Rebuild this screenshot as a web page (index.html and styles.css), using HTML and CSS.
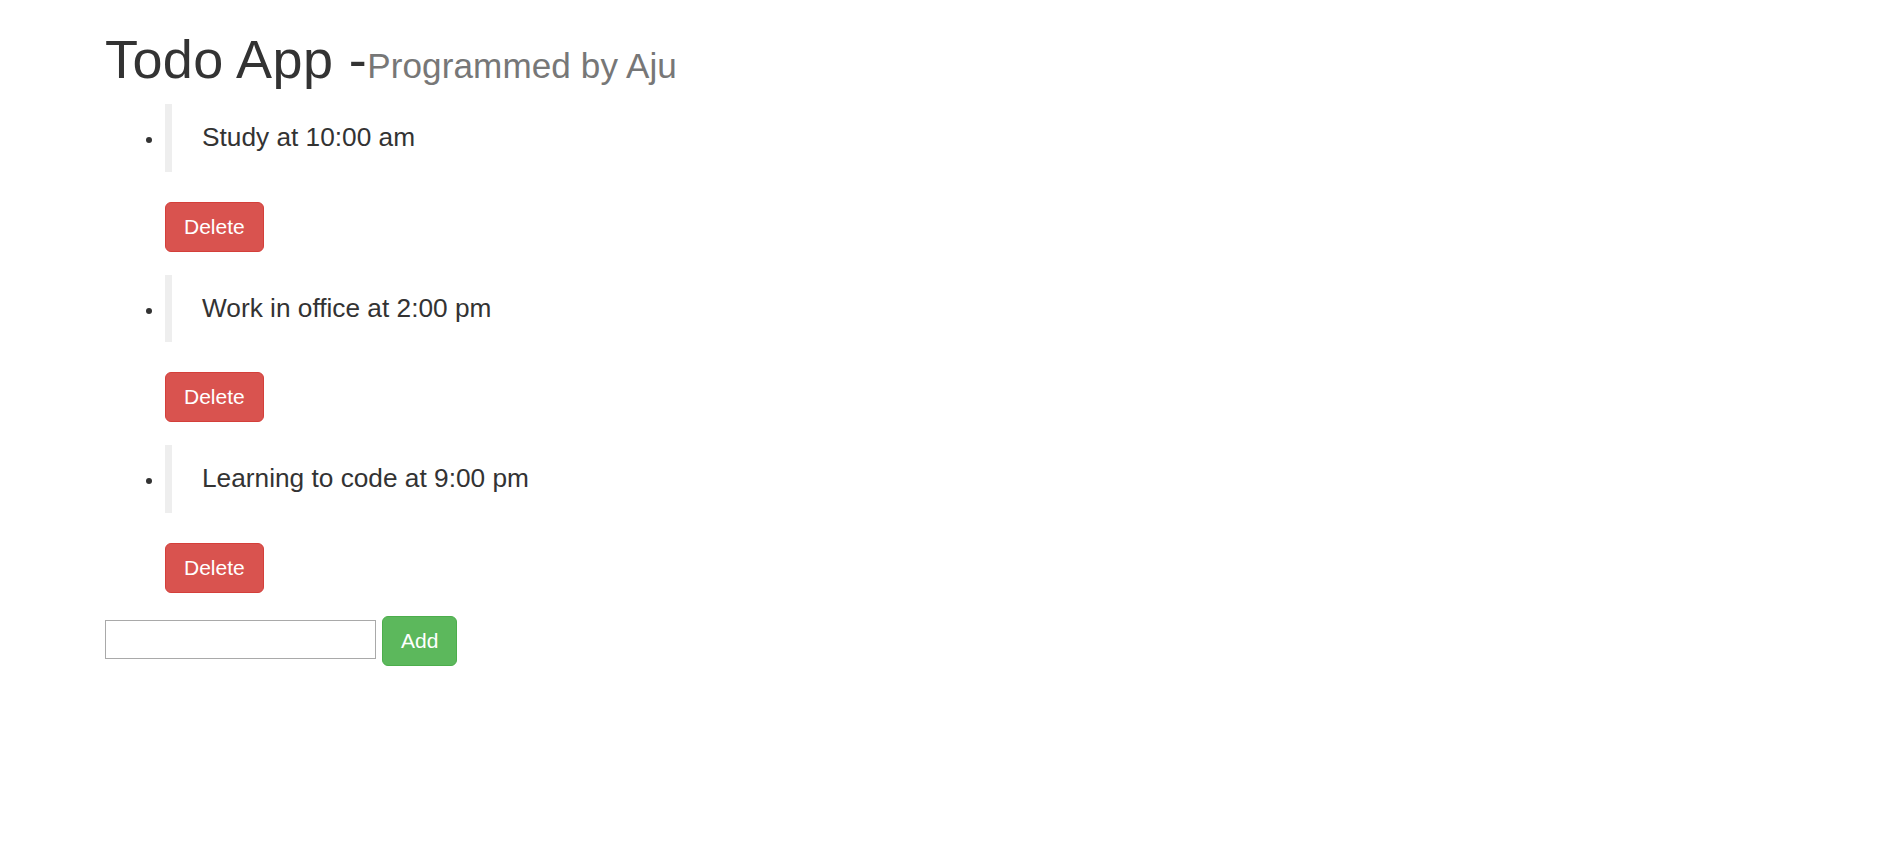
FILE: index.html
```html
<!DOCTYPE html>
<html lang="en">
<head>
<meta charset="utf-8">
<title>Todo App</title>
<link rel="stylesheet" href="styles.css">
</head>
<body>
<div class="container">
  <h1 class="title">Todo App -<small class="subtitle">Programmed by Aju</small></h1>
  <ul class="todo-list">
    <li class="todo-item">
      <blockquote class="todo-text">Study at 10:00 am</blockquote>
      <button class="btn btn-danger" type="button">Delete</button>
    </li>
    <li class="todo-item">
      <blockquote class="todo-text">Work in office at 2:00 pm</blockquote>
      <button class="btn btn-danger" type="button">Delete</button>
    </li>
    <li class="todo-item">
      <blockquote class="todo-text">Learning to code at 9:00 pm</blockquote>
      <button class="btn btn-danger" type="button">Delete</button>
    </li>
  </ul>
  <form class="add-form">
    <input class="add-input" type="text">
    <button class="btn btn-success" type="button">Add</button>
  </form>
</div>
</body>
</html>
```
FILE: styles.css
```css
html, body {
  margin: 0;
  padding: 0;
  background: #fff;
}

body {
  font-family: "Liberation Sans", Arial, Helvetica, sans-serif;
  font-size: 21px;
  line-height: 30px;
  color: #333;
}

.container {
  padding-left: 105px;
}

.title {
  margin: 30px 0 15px;
  font-size: 54px;
  line-height: 1.1;
  font-weight: normal;
  letter-spacing: 0.4px;
  color: #333;
}

.subtitle {
  font-size: 65%;
  line-height: 1;
  font-weight: normal;
  letter-spacing: 0.1px;
  color: #777;
}

.todo-list {
  margin: 0;
  padding-left: 60px;
  list-style: disc;
}

.todo-item {
  margin-bottom: 23px;
}

.todo-text {
  margin: 0 0 30px;
  padding: 15px 30px;
  border-left: 7px solid #eee;
  font-size: 26.25px;
  line-height: 37.5px;
}

.btn {
  display: block;
  width: fit-content;
  box-sizing: border-box;
  height: 50px;
  padding: 9px 18px;
  font-family: "Liberation Sans", Arial, Helvetica, sans-serif;
  font-size: 21px;
  line-height: 30px;
  color: #fff;
  border: 1px solid transparent;
  border-radius: 6px;
  cursor: pointer;
}

.btn-danger {
  background-color: #d9534f;
  border-color: #d43f3a;
}

.btn-success {
  background-color: #5cb85c;
  border-color: #4cae4c;
}

.add-form {
  display: flex;
  align-items: flex-start;
  gap: 6px;
  margin: 0;
}

.add-input {
  box-sizing: border-box;
  width: 271px;
  height: 39px;
  margin-top: 4px;
  padding: 1px 3px;
  border: 1px solid #a9a9a9;
  border-radius: 0;
  font-family: "Liberation Sans", Arial, Helvetica, sans-serif;
  font-size: 20px;
  background: #fff;
}
```
